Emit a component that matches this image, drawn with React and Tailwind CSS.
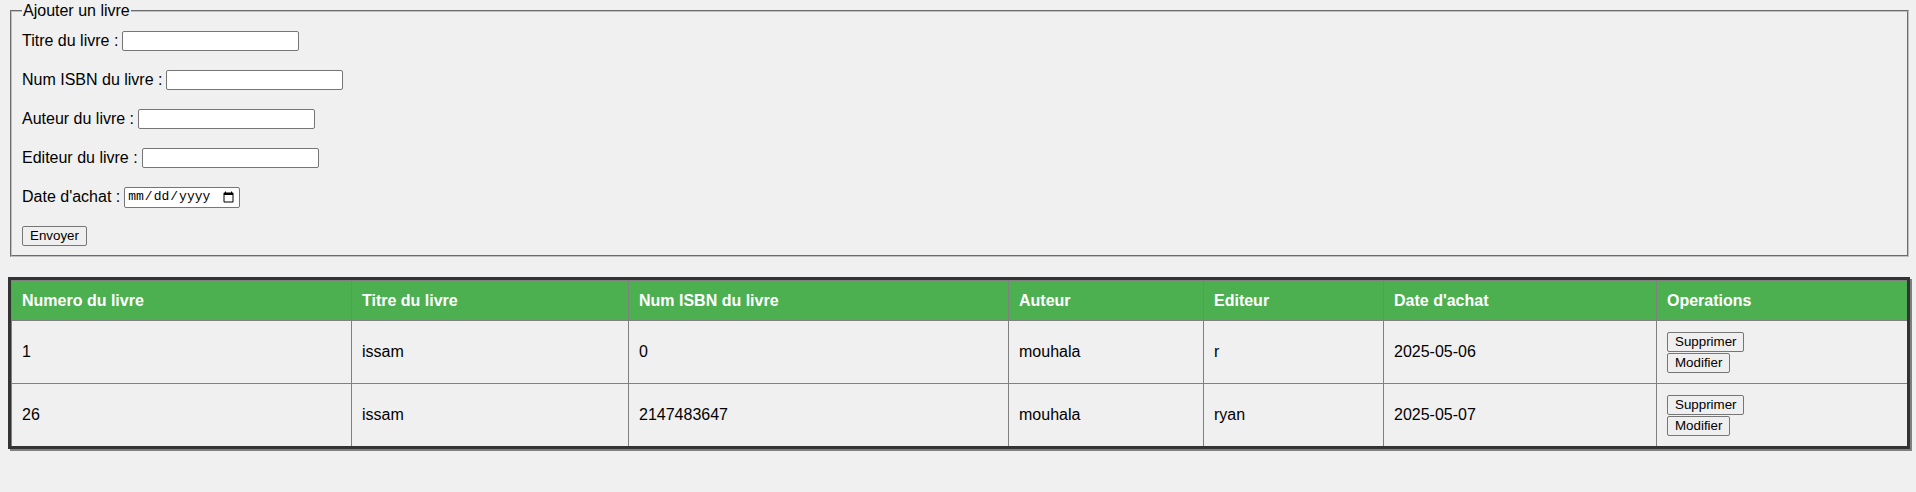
import React from "react";

const livres = [
  { id: 1, titre: "issam", isbn: "0", auteur: "mouhala", editeur: "r", date: "2025-05-06" },
  { id: 26, titre: "issam", isbn: "2147483647", auteur: "mouhala", editeur: "ryan", date: "2025-05-07" }
];

const champs = [
  { label: "Titre du livre :", type: "text" },
  { label: "Num ISBN du livre :", type: "text" },
  { label: "Auteur du livre :", type: "text" },
  { label: "Editeur du livre :", type: "text" },
  { label: "Date d'achat :", type: "date" }
];

const colonnes = ["Numero du livre", "Titre du livre", "Num ISBN du livre", "Auteur", "Editeur", "Date d'achat", "Operations"];

const Bouton = ({ children }) => (
  <button className="h-[20px] px-[7px] border border-[#767676] rounded-[2px] bg-[#efefef] text-[13.33px] leading-none text-black font-['Liberation_Sans',Arial,sans-serif]">
    {children}
  </button>
);

const App = () => {
  return (
    <div className="min-h-screen bg-[#f0f0f0] pt-[2px] px-[8px] font-['Liberation_Sans',Arial,sans-serif] text-[16px] text-black">
      <fieldset className="ml-[2px] w-[1899px] border-2 [border-style:groove] border-[#c0c0c0] px-[10px] pt-[11px] pb-[9px]">
        <legend className="px-[1px] leading-[18px]">Ajouter un livre</legend>
        <div className="flex flex-col gap-[19px]">
          {champs.map((c) => (
            <div key={c.label} className="flex items-center gap-[4px] h-[20px]">
              <label>{c.label}</label>
              {c.type === "date" ? (
                <input
                  type="date"
                  className="w-[116px] h-[21px] px-[2px] border border-[#767676] rounded-[2px] bg-white text-[13px] font-['Liberation_Mono',monospace]"
                />
              ) : (
                <input
                  type="text"
                  className="w-[177px] h-[20px] px-[2px] border border-[#767676] rounded-[2px] bg-white text-[13px]"
                />
              )}
            </div>
          ))}
          <div className="flex h-[20px]">
            <Bouton>Envoyer</Bouton>
          </div>
        </div>
      </fieldset>

      <table className="mt-[20px] w-[1902px] table-fixed border-separate border-spacing-0 border-[3px] border-[#333333] shadow-[2px_2px_0_#808080]">
        <colgroup>
          <col className="w-[340px]" />
          <col className="w-[277px]" />
          <col className="w-[380px]" />
          <col className="w-[195px]" />
          <col className="w-[180px]" />
          <col className="w-[273px]" />
          <col className="w-[251px]" />
        </colgroup>
        <thead>
          <tr>
            {colonnes.map((c) => (
              <th key={c} className="h-[40px] px-[10px] py-0 text-left font-bold text-white bg-[#4caf50] border-t border-l border-[#808080]">
                {c}
              </th>
            ))}
          </tr>
        </thead>
        <tbody>
          {livres.map((l) => (
            <tr key={l.id}>
              {[l.id, l.titre, l.isbn, l.auteur, l.editeur, l.date].map((v, i) => (
                <td key={i} className="h-[63px] px-[10px] py-0 align-middle border-t border-l border-[#808080]">
                  {v}
                </td>
              ))}
              <td className="h-[63px] px-[10px] py-0 align-middle border-t border-l border-[#808080]">
                <div className="flex flex-col items-start gap-[1px]">
                  <Bouton>Supprimer</Bouton>
                  <Bouton>Modifier</Bouton>
                </div>
              </td>
            </tr>
          ))}
        </tbody>
      </table>
    </div>
  );
};

export default App;
